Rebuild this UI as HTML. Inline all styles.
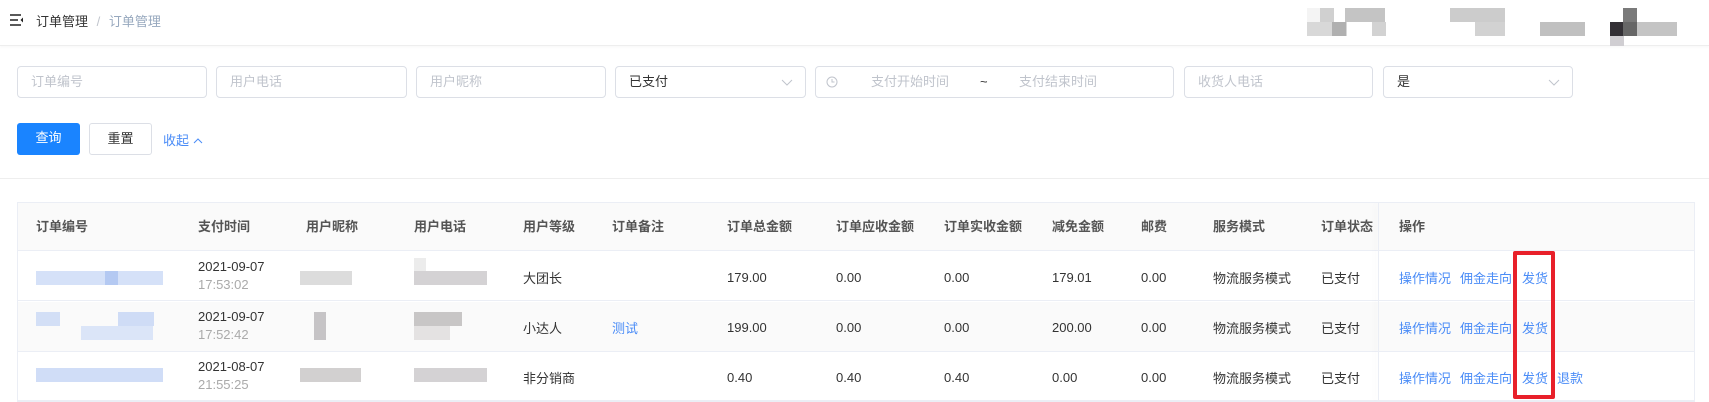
<!DOCTYPE html>
<html><head><meta charset="utf-8"><style>
*{margin:0;padding:0;box-sizing:border-box}
body{width:1709px;height:402px;overflow:hidden;background:#fff;font-family:"Liberation Sans","Noto Sans CJK SC",sans-serif;font-size:13px;color:#333;position:relative}
.a{position:absolute}
.top{left:0;top:0;width:1709px;height:46px;border-bottom:1px solid #eee;box-shadow:0 1px 3px rgba(0,0,0,.04)}
.inp{position:absolute;top:66px;height:32px;border:1px solid #dcdfe6;border-radius:4px;color:#c0c4cc;font-size:13px;line-height:30px;padding-left:13px}
.btn{position:absolute;top:123px;height:32px;border-radius:3px;line-height:30px;text-align:center;font-size:13px}
.th{position:absolute;top:202px;height:49px;line-height:49px;font-weight:bold;color:#555;font-size:13px}
.row{position:absolute;left:17px;width:1678px;height:50px;border-bottom:1px solid #ebeef5}
.c{position:absolute;font-size:13px;color:#333}
.n{position:absolute;font-size:13px;color:#333;margin-top:2px}
.lk{position:absolute;color:#4a8cf7;font-size:13px}
.m{position:absolute;height:11px}
</style></head><body>
<div class="a top"></div>
<svg class="a" style="left:10px;top:14px" width="14" height="12" viewBox="0 0 14 12"><path d="M0 1H11M0 6H8M0 11H11" stroke="#222" stroke-width="1.6"/><path d="M13 3.5L10.5 6 13 8.5z" fill="#222"/></svg>
<div class="a" style="left:36px;top:11px;font-size:13px;color:#333">订单管理 <span style="color:#c0c4cc;margin:0 5px">/</span> <span style="color:#97a8be">订单管理</span></div>
<div class="a" style="left:1307px;top:8px;width:14px;height:14px;background:#f4f4f4"></div>
<div class="a" style="left:1320px;top:8px;width:14px;height:14px;background:#d0d0d0"></div>
<div class="a" style="left:1345px;top:8px;width:40px;height:14px;background:#c4c4c4"></div>
<div class="a" style="left:1307px;top:22px;width:40px;height:14px;background:#d8d8d8"></div>
<div class="a" style="left:1332px;top:22px;width:14px;height:14px;background:#b0b0b0"></div>
<div class="a" style="left:1372px;top:22px;width:14px;height:14px;background:#d2d2d2"></div>
<div class="a" style="left:1450px;top:8px;width:55px;height:14px;background:#cccccc"></div>
<div class="a" style="left:1475px;top:22px;width:30px;height:14px;background:#d2d2d2"></div>
<div class="a" style="left:1540px;top:22px;width:45px;height:14px;background:#c0c0c0"></div>
<div class="a" style="left:1623px;top:8px;width:14px;height:14px;background:#7a7a7a"></div>
<div class="a" style="left:1610px;top:22px;width:14px;height:14px;background:#333035"></div>
<div class="a" style="left:1623px;top:22px;width:14px;height:14px;background:#666"></div>
<div class="a" style="left:1637px;top:22px;width:40px;height:14px;background:#c4c4c4"></div>
<div class="a" style="left:1610px;top:36px;width:14px;height:10px;background:#d0ced2"></div>

<div class="inp" style="left:17px;width:190px">订单编号</div>
<div class="inp" style="left:216px;width:191px">用户电话</div>
<div class="inp" style="left:416px;width:190px">用户昵称</div>
<div class="inp" style="left:615px;width:191px;color:#333">已支付<svg class="a" style="right:12px;top:12px" width="12" height="7" viewBox="0 0 12 7"><path d="M1 1L6 6 11 1" fill="none" stroke="#c0c4cc"/></svg></div>
<div class="inp" style="left:815px;width:359px">
<svg class="a" style="left:10px;top:9px" width="12" height="12" viewBox="0 0 12 12"><circle cx="6" cy="6" r="5" fill="none" stroke="#c0c4cc"/><path d="M6 3V6H8.5" fill="none" stroke="#c0c4cc"/></svg>
<span class="a" style="left:55px">支付开始时间</span><span class="a" style="left:164px;color:#333">~</span><span class="a" style="left:203px">支付结束时间</span></div>
<div class="inp" style="left:1184px;width:189px">收货人电话</div>
<div class="inp" style="left:1383px;width:190px;color:#333">是<svg class="a" style="right:12px;top:12px" width="12" height="7" viewBox="0 0 12 7"><path d="M1 1L6 6 11 1" fill="none" stroke="#c0c4cc"/></svg></div>

<div class="btn" style="left:17px;width:63px;background:#1a84ff;color:#fff">查询</div>
<div class="btn" style="left:89px;width:63px;border:1px solid #dcdfe6;color:#333">重置</div>
<div class="a" style="left:163px;top:130px;color:#4a8cf7;font-size:13px">收起 <svg width="10" height="7" viewBox="0 0 10 7" style="vertical-align:1px"><path d="M1 6L5 2 9 6" fill="none" stroke="#4a8cf7"/></svg></div>
<div class="a" style="left:0;top:178px;width:1709px;height:1px;background:#eee"></div>

<div class="a" style="left:17px;top:202px;width:1678px;height:199px;border:1px solid #ebeef5"></div>
<div class="a" style="left:18px;top:203px;width:1676px;height:48px;background:#fafafa;border-bottom:1px solid #ebeef5"></div>
<div class="a" style="left:18px;top:302px;width:1676px;height:50px;background:#fafafa"></div>
<div class="row" style="top:251px"></div>
<div class="row" style="top:302px"></div>
<div class="row" style="top:352px"></div>
<div class="a" style="left:1378px;top:203px;width:1px;height:198px;background:#ebeef5;box-shadow:-3px 0 6px rgba(0,0,0,.06)"></div>

<div class="th" style="left:36px">订单编号</div>
<div class="th" style="left:198px">支付时间</div>
<div class="th" style="left:306px">用户昵称</div>
<div class="th" style="left:414px">用户电话</div>
<div class="th" style="left:523px">用户等级</div>
<div class="th" style="left:612px">订单备注</div>
<div class="th" style="left:727px">订单总金额</div>
<div class="th" style="left:836px">订单应收金额</div>
<div class="th" style="left:944px">订单实收金额</div>
<div class="th" style="left:1052px">减免金额</div>
<div class="th" style="left:1141px">邮费</div>
<div class="th" style="left:1213px">服务模式</div>
<div class="th" style="left:1321px">订单状态</div>
<div class="th" style="left:1399px">操作</div>

<!-- row 1 -->
<div class="m" style="left:36px;top:271px;width:127px;height:14px;background:#d5e1f8"></div>
<div class="m" style="left:105px;top:271px;width:13px;height:14px;background:#b4c9f2"></div>
<div class="c" style="left:198px;top:259px">2021-09-07</div><div class="c" style="left:198px;top:277px;color:#aaa">17:53:02</div>
<div class="m" style="left:300px;top:271px;width:52px;height:14px;background:#dcdcdc"></div>
<div class="m" style="left:414px;top:271px;width:73px;height:14px;background:#d4d2d4"></div>
<div class="m" style="left:414px;top:258px;width:12px;height:13px;background:#ececec"></div>
<div class="c" style="left:523px;top:268px">大团长</div>
<div class="n" style="left:727px;top:268px">179.00</div>
<div class="n" style="left:836px;top:268px">0.00</div>
<div class="n" style="left:944px;top:268px">0.00</div>
<div class="n" style="left:1052px;top:268px">179.01</div>
<div class="n" style="left:1141px;top:268px">0.00</div>
<div class="c" style="left:1213px;top:268px">物流服务模式</div>
<div class="c" style="left:1321px;top:268px">已支付</div>
<!-- row 2 -->
<div class="m" style="left:36px;top:312px;width:24px;height:14px;background:#d3dff6"></div>
<div class="m" style="left:118px;top:312px;width:36px;height:14px;background:#cfdcf6"></div>
<div class="m" style="left:81px;top:326px;width:72px;height:14px;background:#dbe5f8"></div>
<div class="m" style="left:314px;top:312px;width:12px;height:28px;background:#c6c4c6"></div>
<div class="m" style="left:414px;top:312px;width:48px;height:14px;background:#c8c6c6"></div>
<div class="m" style="left:414px;top:326px;width:36px;height:14px;background:#e4e2e2"></div>
<div class="c" style="left:198px;top:309px">2021-09-07</div><div class="c" style="left:198px;top:327px;color:#aaa">17:52:42</div>
<div class="c" style="left:523px;top:318px">小达人</div>
<div class="c" style="left:612px;top:318px;color:#4a8cf7">测试</div>
<div class="n" style="left:727px;top:318px">199.00</div>
<div class="n" style="left:836px;top:318px">0.00</div>
<div class="n" style="left:944px;top:318px">0.00</div>
<div class="n" style="left:1052px;top:318px">200.00</div>
<div class="n" style="left:1141px;top:318px">0.00</div>
<div class="c" style="left:1213px;top:318px">物流服务模式</div>
<div class="c" style="left:1321px;top:318px">已支付</div>
<!-- row 3 -->
<div class="m" style="left:36px;top:368px;width:127px;height:14px;background:#d0ddf7"></div>
<div class="m" style="left:300px;top:368px;width:61px;height:14px;background:#d2d0d0"></div>
<div class="m" style="left:414px;top:368px;width:73px;height:14px;background:#d4d2d4"></div>
<div class="c" style="left:198px;top:359px">2021-08-07</div><div class="c" style="left:198px;top:377px;color:#aaa">21:55:25</div>
<div class="c" style="left:523px;top:368px">非分销商</div>
<div class="n" style="left:727px;top:368px">0.40</div>
<div class="n" style="left:836px;top:368px">0.40</div>
<div class="n" style="left:944px;top:368px">0.40</div>
<div class="n" style="left:1052px;top:368px">0.00</div>
<div class="n" style="left:1141px;top:368px">0.00</div>
<div class="c" style="left:1213px;top:368px">物流服务模式</div>
<div class="c" style="left:1321px;top:368px">已支付</div>

<div class="lk" style="left:1399px;top:268px">操作情况</div><div class="lk" style="left:1460px;top:268px">佣金走向</div><div class="lk" style="left:1522px;top:268px">发货</div>
<div class="lk" style="left:1399px;top:318px">操作情况</div><div class="lk" style="left:1460px;top:318px">佣金走向</div><div class="lk" style="left:1522px;top:318px">发货</div>
<div class="lk" style="left:1399px;top:368px">操作情况</div><div class="lk" style="left:1460px;top:368px">佣金走向</div><div class="lk" style="left:1522px;top:368px">发货</div><div class="lk" style="left:1557px;top:368px">退款</div>
<div class="a" style="left:1513px;top:251px;width:42px;height:148px;border:4px solid #e8202a;border-radius:2px"></div>
</body></html>
